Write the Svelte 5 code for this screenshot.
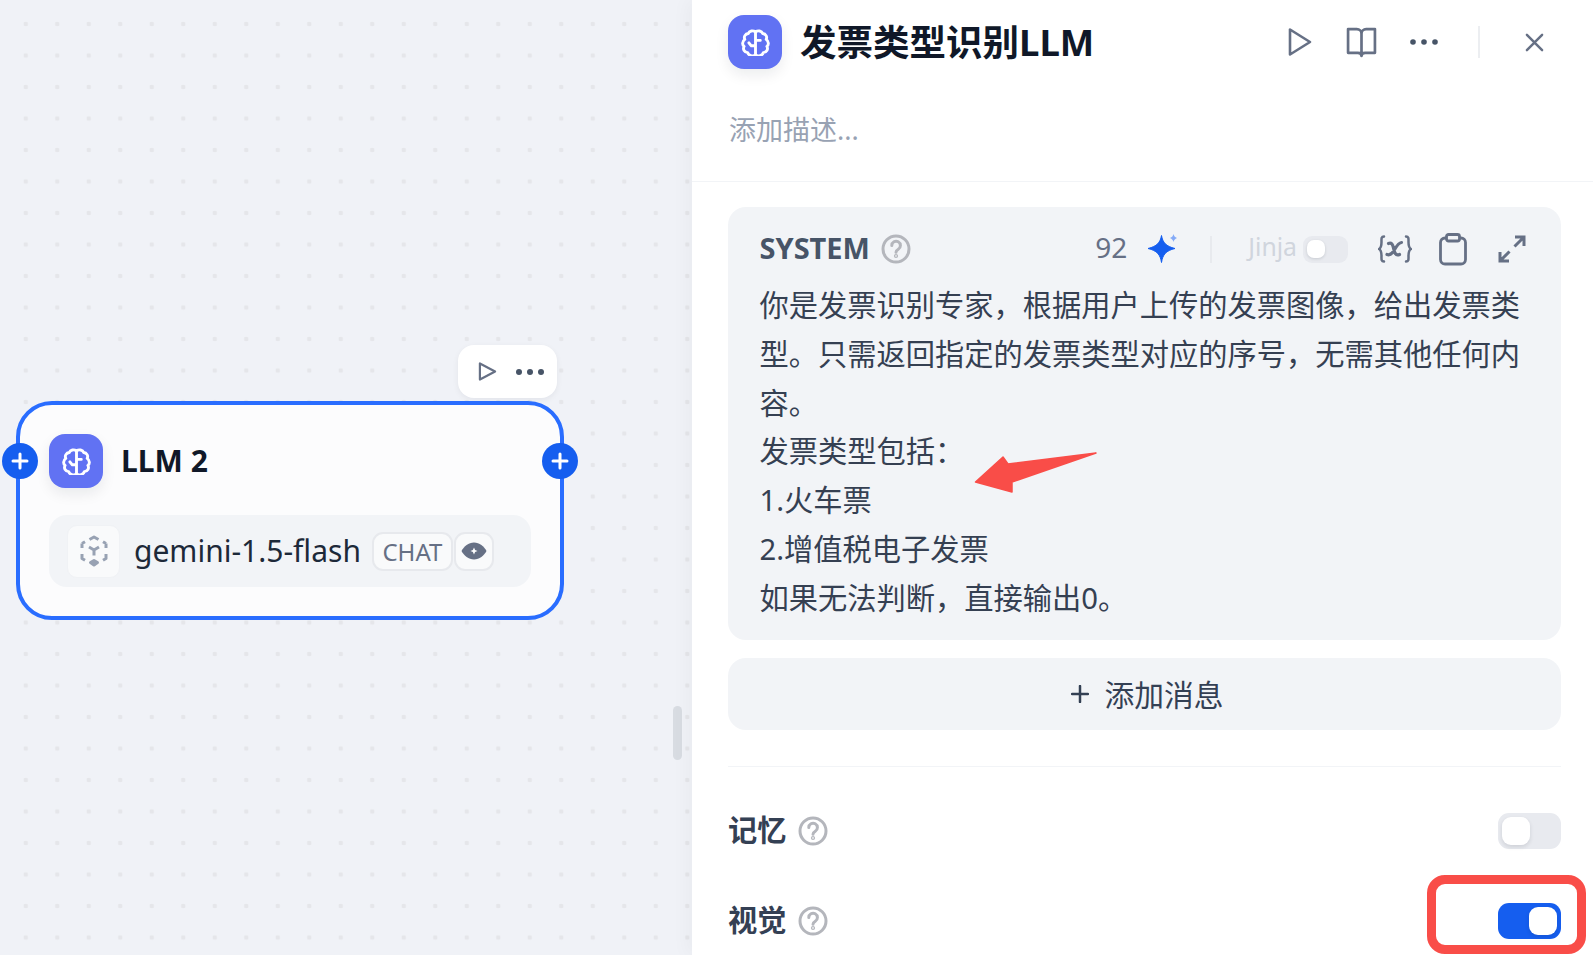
<script>
  const lines = [
    '你是发票识别专家，根据用户上传的发票图像，给出发票类',
    '型。只需返回指定的发票类型对应的序号，无需其他任何内',
    '容。',
    '发票类型包括：',
    '1.火车票',
    '2.增值税电子发票',
    '如果无法判断，直接输出0。'
  ];
</script>

{#snippet brain()}
  <svg class="brain" viewBox="3 1 24 22.5" fill="none" stroke="#fff" stroke-width="2.400" stroke-linecap="round" stroke-linejoin="round">
    <path d="M15 3.500c-2-1.600-5.200-1-6 1.300-2.600.2-4 2.800-2.900 4.900-2.300 1.600-2.300 4.700-.6 5.800-1.300 2.300.3 5.200 3 5.200.7 2.500 4.400 3.500 6.500 1.800 2.100 1.700 5.800.7 6.500-1.800 2.700 0 4.300-2.900 3-5.200 1.700-1.100 1.700-4.200-.6-5.800 1.100-2.100-.3-4.700-2.900-4.900-.8-2.300-4-2.900-6-1.300z"/>
    <path d="M15 3.500v19.500M15 10.500h4M15 15h-3.500M9.500 12.500l2 2.500"/>
  </svg>
{/snippet}

{#snippet help()}
  <svg class="help" viewBox="0 0 30 30" fill="none" stroke="#b4b6bc" stroke-width="3" stroke-linecap="round">
    <circle cx="15" cy="15" r="13"/>
    <path d="M10.800 11.500a4.300 4.300 0 1 1 6.500 3.700c-1.500.9-2.300 1.600-2.300 3"/>
    <circle cx="15" cy="22" r=".6" fill="#b4b6bc"/>
  </svg>
{/snippet}

<div class="page">
  <section class="canvas">
    <div class="scroll-thumb"></div>

    <div class="toolbar">
      <svg class="tool-play" viewBox="0 0 20 22" fill="none" stroke="#667085" stroke-width="2.300" stroke-linejoin="round"><path d="M2 2.500v17L18 11z"/></svg>
      <svg class="tool-dots" viewBox="0 0 28 6" fill="#475467"><circle cx="3" cy="3" r="3"/><circle cx="14" cy="3" r="3"/><circle cx="25" cy="3" r="3"/></svg>
    </div>

    <article class="node">
      <span class="handle left"><svg viewBox="0 0 18 18" stroke="#fff" stroke-width="3" stroke-linecap="round"><path d="M9 2v14M2 9h14"/></svg></span>
      <span class="handle right"><svg viewBox="0 0 18 18" stroke="#fff" stroke-width="3" stroke-linecap="round"><path d="M9 2v14M2 9h14"/></svg></span>
      <div class="node-head">
        <div class="app-icon">{@render brain()}</div>
        <h2>LLM 2</h2>
      </div>
      <div class="model">
        <div class="model-icon">
          <svg viewBox="0 0 30 32" fill="none" stroke="#98a2b3" stroke-width="3" stroke-linejoin="round">
            <path d="M10.500 4.500 15 2l4.500 2.500"/>
            <path d="M3 8.500l3-1.800M27 8.500l-3-1.800M3 8.500V13M27 8.500V13"/>
            <path d="M3 19v4.500L6 25.300M27 19v4.500L24 25.300"/>
            <path d="M10 12l5 3 5-3M15 15v5.500"/>
            <path d="M11.500 27.500 15 30l3.500-2.500-3.500-2z" fill="#98a2b3"/>
          </svg>
        </div>
        <span class="model-name">gemini-1.5-flash</span>
        <span class="tag">CHAT</span>
        <span class="tag eye">
          <svg viewBox="0 0 26 18"><path d="M13 .5c5.500 0 10 4 12.500 8.500C23 13.500 18.500 17.500 13 17.500S3 13.500.5 9C3 4.500 7.500.5 13 .5z" fill="#667085"/><path d="M13 5.500l1.100 2.400L16.500 9l-2.400 1.100L13 12.500l-1.100-2.400L9.500 9l2.400-1.100z" fill="#fff"/></svg>
        </span>
      </div>
    </article>
  </section>

  <section class="panel">
    <header class="panel-head">
      <div class="app-icon">{@render brain()}</div>
      <h1>发票类型识别LLM</h1>
      <div class="actions">
        <svg class="a-play" viewBox="0 0 24 30" fill="none" stroke="#667085" stroke-width="2.600" stroke-linejoin="round"><path d="M2 2.500v25L22 15z"/></svg>
        <svg class="a-book" viewBox="0 0 30 30" fill="none" stroke="#667085" stroke-width="2.600" stroke-linejoin="round"><path d="M15 6.500C15 4 13 2 10.500 2H2v23h9.500c2 0 3.500 1 3.500 3 0-2 1.500-3 3.500-3H28V2h-8.500C17 2 15 4 15 6.500zM15 6.500V28"/></svg>
        <svg class="a-dots" viewBox="0 0 28 6" fill="#475467"><circle cx="3" cy="3" r="2.800"/><circle cx="14" cy="3" r="2.800"/><circle cx="25" cy="3" r="2.800"/></svg>
        <span class="a-sep"></span>
        <svg class="a-close" viewBox="0 0 20 20" fill="none" stroke="#667085" stroke-width="2.600" stroke-linecap="round"><path d="M2 2l16 16M18 2L2 18"/></svg>
      </div>
    </header>
    <p class="desc">添加描述...</p>
    <div class="rule"></div>

    <div class="body">
      <div class="card">
        <div class="card-head">
          <strong class="sys">SYSTEM</strong>
          {@render help()}
          <span class="spacer"></span>
          <span class="count">92</span>
          <svg class="spark" viewBox="0 0 30 30">
            <path d="M13.500 1.500c1.200 7 4.500 10.800 13.500 13-9 2.200-12.300 6-13.500 14-1.200-8-4.500-11.800-13.500-14 9-2.200 12.300-6 13.500-13z" fill="#155eef" stroke="#155eef" stroke-width="1" stroke-linejoin="round"/>
            <path d="M25.500 0c.4 2 1.400 3 3.500 4-2.100 1-3.100 2-3.500 4-.4-2-1.400-3-3.500-4 2.100-1 3.100-2 3.500-4z" fill="#84aaf7"/>
          </svg>
          <span class="card-sep"></span>
          <span class="jinja">Jinja</span>
          <span class="mini-toggle"><span></span></span>
          <span class="var">
            <svg viewBox="0 0 34 28" fill="none" stroke="#667085" stroke-width="2.500" stroke-linecap="round" stroke-linejoin="round">
              <path d="M6 1.500C3 1.500 3.500 4 3.500 7c0 4-.5 6-2.500 7 2 1 2.500 3 2.500 7 0 3-.5 5.500 2.500 5.500M28 1.500c3 0 2.500 2.500 2.500 5.500 0 4 .5 6 2.500 7-2 1-2.500 3-2.500 7 0 3 .5 5.500-2.500 5.500"/>
              <path d="M10.500 8.500c3-1 4.200.8 5 4.500s1.800 8.500 6 6.500M23.500 7.500c-3 .2-5.500 4.500-7.500 8s-4 5-7 4" stroke-width="3.200"/>
            </svg>
          </span>
          <svg class="clip" viewBox="0 0 28 33" fill="none" stroke="#667085" stroke-width="2.800" stroke-linejoin="round"><path d="M7 5H6a4.500 4.500 0 0 0-4.500 4.500v17A4.500 4.500 0 0 0 6 31h16a4.500 4.500 0 0 0 4.500-4.500v-17A4.500 4.500 0 0 0 22 5h-1"/><rect x="7.500" y="1.500" width="13" height="6.500" rx="2"/></svg>
          <svg class="expand" viewBox="0 0 28 28" fill="none" stroke="#667085" stroke-width="3"><path d="M17 2h9v9M26 2l-9.500 9.500M11 26H2v-9M2 26l9.500-9.500"/></svg>
        </div>
        <div class="prompt">
          {#each lines as line}
            <div>{line}</div>
          {/each}
        </div>
      </div>

      <div class="add-msg">
        <svg viewBox="0 0 18 18" stroke="#344054" stroke-width="2.500" stroke-linecap="round"><path d="M9 1v16M1 9h16"/></svg>
        <span>添加消息</span>
      </div>

      <div class="rule2"></div>

      <div class="setting first">
        <span class="set-label">记忆</span>
        {@render help()}
        <span class="spacer"></span>
        <span class="toggle"><span></span></span>
      </div>
      <div class="setting second">
        <span class="set-label">视觉</span>
        {@render help()}
        <span class="spacer"></span>
        <span class="toggle on"><span></span></span>
      </div>
    </div>

    <div class="mark-box"></div>
  </section>

  <svg class="arrow" viewBox="0 0 124 43"><path d="M1.500 31 29 6 34 13 122 2 38 31 38 41z" fill="#f94d48" stroke="#f94d48" stroke-width="1.500" stroke-linejoin="round"/></svg>
</div>

<style>
  :global(body) {
    margin: 0;
    background: #fff;
  }
  .page {
    position: relative;
    display: flex;
    width: 1593px;
    height: 955px;
    overflow: hidden;
    font-family: "Noto Sans", "Noto Sans CJK SC", sans-serif;
    color: #344054;
  }
  .canvas {
    position: relative;
    flex: 0 0 692px;
    height: 100%;
    background-color: #f0f2f7;
    background-image: radial-gradient(circle at center, #e5e6ea 0, #e5e6ea 2px, transparent 2.600px);
    background-size: 31.500px 31.500px;
    background-position: 10px 8.250px;
  }
  .scroll-thumb {
    position: absolute;
    left: 673px;
    top: 706px;
    width: 9px;
    height: 54px;
    border-radius: 5px;
    background: #d8dce2;
  }
  .toolbar {
    position: absolute;
    left: 458px;
    top: 345px;
    width: 99px;
    height: 53px;
    border-radius: 16px;
    background: #fff;
    box-shadow: 0 2px 6px rgba(16, 24, 40, 0.06);
    display: flex;
    align-items: center;
    gap: 19px;
    padding-left: 20px;
    box-sizing: border-box;
  }
  .tool-play { width: 19px; height: 21px; }
  .tool-dots { width: 28px; height: 6px; }
  .node {
    position: absolute;
    left: 16px;
    top: 401px;
    width: 548px;
    height: 219px;
    box-sizing: border-box;
    border: 4px solid #296dff;
    border-radius: 36px;
    background: #fcfcfd;
    padding: 29px 29px 0;
  }
  .handle {
    position: absolute;
    top: 38px;
    width: 36px;
    height: 36px;
    border-radius: 50%;
    background: #155eef;
    display: flex;
    align-items: center;
    justify-content: center;
  }
  .handle svg { width: 18px; height: 18px; }
  .handle.left { left: -18px; }
  .handle.right { right: -18px; }
  .node-head {
    display: flex;
    align-items: center;
    gap: 18px;
  }
  .app-icon {
    flex: none;
    width: 54px;
    height: 54px;
    border-radius: 16px;
    background: #6172f3;
    box-shadow: 0 6px 14px rgba(16, 24, 40, 0.08);
    display: flex;
    align-items: center;
    justify-content: center;
  }
  .brain { width: 29px; height: 27px; }
  h2 {
    margin: 0;
    font-size: 30px;
    line-height: 40px;
    font-weight: 700;
    color: #101828;
  }
  .model {
    display: flex;
    align-items: center;
    height: 72px;
    margin-top: 27px;
    border-radius: 18px;
    background: #f2f4f7;
    padding-left: 18px;
  }
  .model-icon {
    flex: none;
    width: 53px;
    height: 53px;
    box-sizing: border-box;
    border: 1px solid #f0f2f5;
    border-radius: 10px;
    background: #f9fafb;
    display: flex;
    align-items: center;
    justify-content: center;
  }
  .model-icon svg { width: 30px; height: 32px; }
  .model-name {
    margin-left: 14px;
    font-size: 30px;
    line-height: 40px;
    color: #1d2939;
    white-space: nowrap;
  }
  .tag {
    flex: none;
    height: 39px;
    box-sizing: border-box;
    border: 2.500px solid #e7e9ed;
    border-radius: 11px;
    background: #f9fafb;
    font-size: 24px;
    color: #667085;
    display: flex;
    align-items: center;
    justify-content: center;
    width: 81px;
    margin-left: 11px;
  }
  .tag.eye {
    width: 40px;
    margin-left: 1px;
  }
  .tag.eye svg { width: 26px; height: 18px; }

  .panel {
    position: relative;
    flex: 1;
    height: 100%;
    background: #fff;
    box-shadow: -6px 0 16px rgba(16, 24, 40, 0.03);
    box-sizing: border-box;
  }
  .panel-head {
    display: flex;
    align-items: center;
    padding: 15px 32px 0 36px;
  }
  h1 {
    margin: 0 0 0 18px;
    font-size: 36.500px;
    line-height: 54px;
    font-weight: 700;
    color: #101828;
    white-space: nowrap;
  }
  .actions {
    margin-left: auto;
    display: flex;
    align-items: center;
    padding-right: 17px;
    height: 54px;
  }
  .a-play { width: 24px; height: 30px; margin-right: 1px; }
  .a-book { width: 31px; height: 31px; margin-left: 33px; }
  .a-dots { width: 28px; height: 6px; margin-left: 33px; }
  .a-sep { width: 2px; height: 32px; background: #eceef1; margin-left: 40px; }
  .a-close { width: 19px; height: 19px; margin-left: 45px; }
  .desc {
    margin: 41px 0 0;
    padding-left: 37px;
    font-size: 27px;
    line-height: 40px;
    color: #98a2b3;
  }
  .rule {
    height: 1px;
    margin-top: 31px;
    background: #f2f4f7;
  }
  .body {
    padding: 25px 32px 0 36px;
  }
  .card {
    background: #f2f4f7;
    border-radius: 18px;
    padding: 24px 32px 12px 31.500px;
    height: 433px;
    box-sizing: border-box;
  }
  .card-head {
    display: flex;
    align-items: center;
    height: 36px;
  }
  .sys {
    font-size: 29px;
    line-height: 36px;
    font-weight: 700;
    color: #475467;
    margin-bottom: 2px;
  }
  .help { flex: none; width: 30px; height: 30px; margin-left: 11px; margin-bottom: 1px; }
  .spacer { flex: 1; }
  .count {
    font-size: 28px;
    color: #667085;
    margin-bottom: 4px;
    margin-right: 2px;
  }
  .spark { width: 30px; height: 30px; margin-left: 19px; }
  .card-sep { width: 2px; height: 27px; background: #e8eaee; margin-left: 32px; margin-right: 1px; }
  .jinja {
    margin-left: 35px;
    font-size: 24.750px;
    color: #d0d5dd;
    margin-bottom: 5px;
  }
  .mini-toggle {
    margin-left: 6px;
    width: 45px;
    height: 27px;
    border-radius: 9px;
    background: #e8eaef;
    padding: 4px;
    box-sizing: border-box;
  }
  .mini-toggle span {
    display: block;
    width: 18px;
    height: 18px;
    border-radius: 7px;
    background: #fff;
    box-shadow: 0 1px 3px rgba(16, 24, 40, 0.15);
  }
  .var { margin-left: 30px; display: flex; }
  .var svg { width: 34px; height: 28px; }
  .clip { width: 28px; height: 33px; margin-left: 27px; }
  .expand { width: 28px; height: 28px; margin-left: 31px; margin-right: 3px; }
  .prompt {
    margin-top: 14px;
    font-size: 29.250px;
    line-height: 48.800px;
    color: #354052;
    white-space: nowrap;
  }
  .add-msg {
    margin-top: 18px;
    height: 72px;
    border-radius: 18px;
    background: #f2f4f7;
    display: flex;
    align-items: center;
    justify-content: center;
    gap: 15px;
    font-size: 29.750px;
    color: #344054;
  }
  .add-msg svg { width: 18px; height: 18px; margin-left: 6px; }
  .add-msg span { margin-bottom: 2px; }
  .rule2 {
    height: 1px;
    margin-top: 36px;
    background: #f2f4f7;
  }
  .setting {
    display: flex;
    align-items: center;
    height: 36px;
  }
  .setting.first { margin-top: 46px; }
  .setting.second { margin-top: 54px; }
  .set-label {
    font-size: 29.250px;
    font-weight: 700;
    color: #344054;
    margin-bottom: 5px;
  }
  .toggle {
    width: 63px;
    height: 36px;
    border-radius: 11px;
    background: #e8eaef;
    padding: 4px;
    box-sizing: border-box;
    display: flex;
  }
  .toggle span {
    display: block;
    width: 28px;
    height: 28px;
    border-radius: 9px;
    background: #fff;
    box-shadow: 0 2px 4px rgba(16, 24, 40, 0.12);
  }
  .toggle.on { background: #155eef; justify-content: flex-end; }
  .mark-box {
    position: absolute;
    left: 735px;
    top: 875px;
    width: 159px;
    height: 79px;
    box-sizing: border-box;
    border: 9px solid #f94d48;
    border-radius: 18px;
  }
  .arrow {
    position: absolute;
    left: 974px;
    top: 451px;
    width: 124px;
    height: 43px;
  }
</style>
